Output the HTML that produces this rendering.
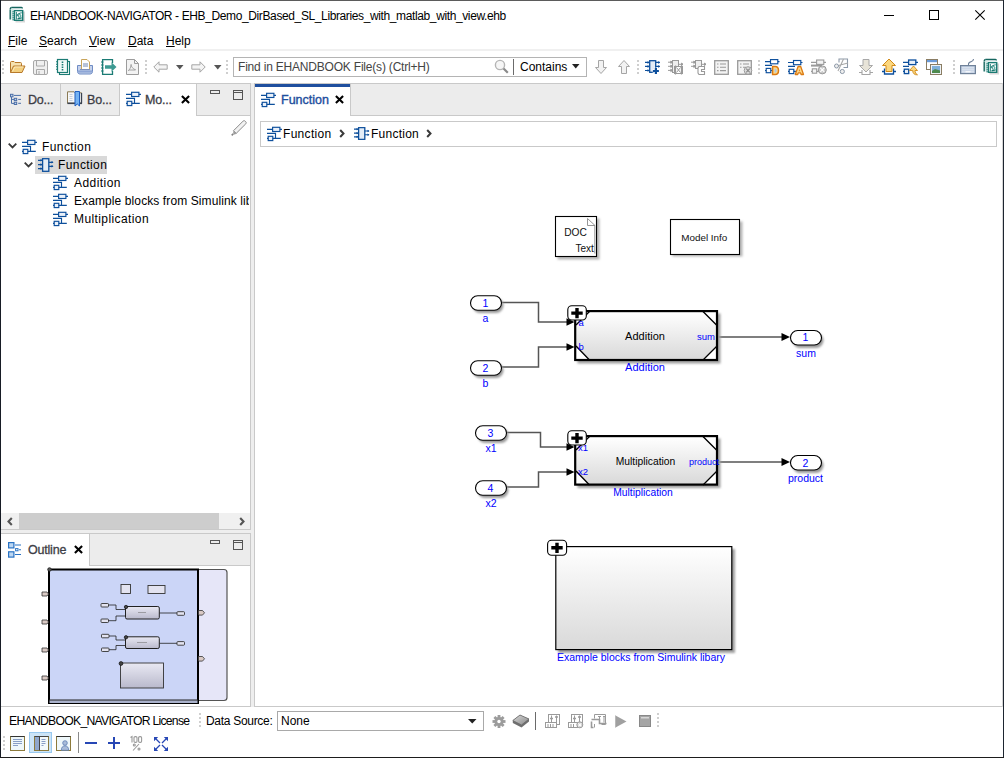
<!DOCTYPE html>
<html><head><meta charset="utf-8">
<style>
*{box-sizing:border-box}
html,body{margin:0;padding:0}
body{width:1004px;height:758px;overflow:hidden;position:relative;background:#fff;font-family:"Liberation Sans",sans-serif;font-size:12px;color:#000}
.a{position:absolute}
.t{position:absolute;white-space:nowrap;line-height:14px}
svg{position:absolute;overflow:visible}
.u{text-decoration:underline;text-underline-offset:1px}
.bd{background:#c9c9c9}
.tb{color:#3d3d45;-webkit-text-stroke:0.3px #3d3d45;letter-spacing:-0.2px}
.dl{position:absolute;width:2px;background:repeating-linear-gradient(to bottom,#cfcfcf 0 2px,transparent 2px 4px)}
</style></head><body>

<svg width="0" height="0" style="position:absolute">
<defs>
<symbol id="mdl" viewBox="0 0 16 16">
<path d="M0 3.4h15M0 7.4h8.5v5M0 12.4h13.8" fill="none" stroke="#0d4f9c" stroke-width="1.15"/>
<rect x="5.6" y="1.3" width="7.3" height="4.2" fill="#eaf1fa" stroke="#0d4f9c" stroke-width="1.15"/>
<rect x="1.2" y="10.3" width="4.6" height="4.3" fill="#eaf1fa" stroke="#0d4f9c" stroke-width="1.15"/>
</symbol>
<symbol id="cmp" viewBox="0 0 16 14">
<rect x="4.6" y="0.7" width="6.2" height="12.6" fill="#e4edf7" stroke="#0d4f9c" stroke-width="1.3"/>
<path d="M0 2.3h4M0 6.6h4M0 10.6h4M10.8 4.3h4.2M10.8 8.3h4.2" stroke="#0d4f9c" stroke-width="1.2"/>
<path d="M2.5 1l2 1.3-2 1.3zM2.5 5.3l2 1.3-2 1.3zM2.5 9.3l2 1.3-2 1.3zM13.5 3l2 1.3-2 1.3zM13.5 7l2 1.3-2 1.3z" fill="#0d4f9c"/>
</symbol>
<symbol id="xcl" viewBox="0 0 10 10">
<path d="M1 1L9 9M9 1L1 9" stroke="#000" stroke-width="2.3"/>
</symbol>
</defs>
</svg>

<!-- window frame -->
<div class="a" style="left:0;top:0;width:1004px;height:1px;background:#5b5b5b"></div>
<div class="a" style="left:0;top:0;width:1px;height:758px;background:#171c25"></div>
<div class="a" style="left:1003px;top:0;width:1px;height:758px;background:#1d2530"></div>
<div class="a" style="left:0;top:757px;width:1004px;height:1px;background:#1d1d1d"></div>

<!-- title bar -->
<!-- app icon -->
<svg style="left:9px;top:6px" width="17" height="18" viewBox="0 0 17 18">
<rect x="6.5" y="5.5" width="9.5" height="11" fill="#c8c8c8" opacity="0.7"/>
<path d="M2.8 1.5H12.5c0.6 0 0.9 0.4 0.9 1" fill="none" stroke="#16665f" stroke-width="1.3"/>
<path d="M1.2 3.5v10" stroke="#16665f" stroke-width="1.4"/>
<path d="M2.2 2.5h2.3v11h-2.3z" fill="#cfe8e4"/><path d="M1.2 3.3c0-1 0.6-1.8 1.6-1.8" fill="none" stroke="#16665f" stroke-width="1.3"/>
<rect x="5.4" y="4.6" width="8.3" height="9.7" fill="#fff" stroke="#1a7a72" stroke-width="1.4"/>
<path d="M3.5 5l2 0.8-2 0.8zM3.5 7l2 0.8-2 0.8zM3.5 9l2 0.8-2 0.8zM3.5 11l2 0.8-2 0.8zM3.5 13l2 0.8-2 0.8z" fill="#1a7a72"/>
<path d="M7.3 6v7.5" stroke="#1a7a72" stroke-width="1"/>
<path d="M8 10c0.5-2 2-3 4.8-3.3M8.5 12.8c1.5-0.5 2.8-0.3 4.3-1" fill="none" stroke="#1a7a72" stroke-width="1.1"/>
<circle cx="10.6" cy="9.9" r="1.9" fill="#5aa79f"/>
<path d="M10.6 8.8l0.7 1.1-0.7 1.1-0.7-1.1z" fill="#fff"/>
</svg>
<!-- window controls -->
<div class="a" style="left:884px;top:15px;width:10px;height:1px;background:#000"></div>
<div class="a" style="left:929px;top:10px;width:10px;height:10px;border:1px solid #000"></div>
<svg style="left:975px;top:10px" width="10" height="10" viewBox="0 0 10 10"><path d="M0.3 0.3L9.7 9.7M9.7 0.3L0.3 9.7" stroke="#000" stroke-width="1.1"/></svg>

<!-- toolbar -->
<div class="dl" style="left:2px;top:60px;height:14px"></div>
<svg style="left:9px;top:59px" width="17" height="16" viewBox="0 0 17 16">
<path d="M1.5 13.5v-10c0-0.6 0.4-1 1-1h2.5l1 1h5.5c0.6 0 1 0.4 1 1v2.5" fill="#f6e2b0" stroke="#b8792a" stroke-width="1"/>
<path d="M1.5 13.5l3-6.5h11.5l-3 6.5z" fill="#f3cf7e" stroke="#b8792a" stroke-width="1" stroke-linejoin="round"/>
<path d="M3.5 12.5l2.2-4.5h8.5" fill="none" stroke="#fbe9bd" stroke-width="1"/>
</svg>
<svg style="left:32px;top:59px" width="16" height="16" viewBox="0 0 16 16">
<rect x="1.5" y="1.5" width="14" height="14" rx="1.5" fill="#efefef" stroke="#a8a8a8" stroke-width="1"/>
<path d="M4.5 1.5v5.5h8v-5.5M4.5 15.5v-5h8v5M7 12v3.5" fill="none" stroke="#a8a8a8" stroke-width="1"/>
</svg>
<svg style="left:55px;top:59px" width="16" height="16" viewBox="0 0 16 16">
<rect x="4.5" y="2.5" width="10" height="13" fill="#fff" stroke="#1b7b74" stroke-width="1.1"/>
<rect x="2.5" y="0.5" width="10" height="13" fill="#f2faf8" stroke="#1b7b74" stroke-width="1.2"/>
<path d="M7.5 2.5v9" stroke="#1b7b74" stroke-width="1.6" stroke-dasharray="1.5 1"/>
<path d="M1 2.5l2 1M1 5l2 1M1 7.5l2 1M1 10l2 1" stroke="#1b7b74" stroke-width="1"/>
</svg>
<svg style="left:77px;top:59px" width="17" height="16" viewBox="0 0 17 16">
<path d="M0.5 6.5h15v6c0 1.5-1 2.5-2.5 2.5h-10c-1.5 0-2.5-1-2.5-2.5z" fill="#c6d3ec" stroke="#6f8cc4" stroke-width="1"/>
<path d="M1 12.5h14" stroke="#8ea6d6" stroke-width="2.2"/>
<path d="M4.5 0.5h5.5l2.5 2.5v7.5h-8z" fill="#fdfdfd" stroke="#c8a45a" stroke-width="1"/>
<path d="M6 5h5M6 7h5" stroke="#6f86b4" stroke-width="1"/>
<path d="M3 10.5h10" stroke="#7d8fb8" stroke-width="1"/>
</svg>
<svg style="left:100px;top:59px" width="17" height="16" viewBox="0 0 17 16">
<path d="M12.5 4V0.6H2.6V15.4H12.5V12" fill="none" stroke="#1b7b74" stroke-width="1.3"/>
<path d="M1 3h2.5M1 6h2.5M1 9h2.5M1 12h2.5" stroke="#1b7b74" stroke-width="1"/>
<path d="M5 6.3h6.5v-3l5 4.7-5 4.7v-3h-6.5z" fill="#3d9a92"/>
</svg>
<svg style="left:126px;top:59px" width="13" height="16" viewBox="0 0 13 16">
<path d="M0.5 0.5h8l4 4v11h-12z" fill="#f3f3f3" stroke="#9c9c9c" stroke-width="1"/>
<path d="M8.5 0.5v4h4" fill="none" stroke="#9c9c9c" stroke-width="1"/>
<path d="M5 5c0 3 2 5 5 6M5 6c0 3-2 5-3 6M3 11h6" fill="none" stroke="#9c9c9c" stroke-width="0.9"/>
</svg>
<div class="dl" style="left:145px;top:60px;height:14px"></div>
<svg style="left:153px;top:61px" width="15" height="12" viewBox="0 0 15 12">
<path d="M0.8 6L6 0.8v3h8.2v4.4H6v3z" fill="#f4f4f4" stroke="#a5a5a5" stroke-width="1" stroke-linejoin="round"/>
</svg>
<svg style="left:176px;top:65px" width="8" height="5" viewBox="0 0 8 5"><path d="M0 0h7.5l-3.75 4.5z" fill="#555"/></svg>
<svg style="left:191px;top:61px" width="15" height="12" viewBox="0 0 15 12">
<path d="M14.2 6L9 0.8v3H0.8v4.4H9v3z" fill="#f4f4f4" stroke="#a5a5a5" stroke-width="1" stroke-linejoin="round"/>
</svg>
<svg style="left:214px;top:65px" width="8" height="5" viewBox="0 0 8 5"><path d="M0 0h7.5l-3.75 4.5z" fill="#555"/></svg>
<div class="dl" style="left:226px;top:60px;height:14px"></div>
<!-- search -->
<div class="a" style="left:233px;top:57px;width:354px;height:20px;border:1px solid #b4b4b4;background:#fff"></div>
<div class="t" style="left:238px;top:60px;color:#444;letter-spacing:-0.2px">Find in EHANDBOOK File(s) (Ctrl+H)</div>
<svg style="left:494px;top:59px" width="15" height="15" viewBox="0 0 15 15">
<circle cx="6" cy="6" r="4.6" fill="#f6f6f6" stroke="#b5b5b5" stroke-width="1.4"/>
<path d="M9.5 9.5L13.8 13.8" stroke="#8a8a8a" stroke-width="2.2"/>
</svg>
<div class="a" style="left:513px;top:59px;width:1px;height:16px;background:#6b6b6b"></div>
<div class="t" style="left:520px;top:60px">Contains</div>
<svg style="left:572px;top:64px" width="8" height="5" viewBox="0 0 8 5"><path d="M0 0h7.5l-3.75 4.5z" fill="#222"/></svg>

<div class="t" style="left:30px;top:9px;letter-spacing:-0.38px">EHANDBOOK-NAVIGATOR - EHB_Demo_DirBased_SL_Libraries_with_matlab_with_view.ehb</div>

<!-- menu -->
<div class="t" style="left:8px;top:34px"><span class="u">F</span>ile</div>
<div class="t" style="left:39px;top:34px"><span class="u">S</span>earch</div>
<div class="t" style="left:89px;top:34px"><span class="u">V</span>iew</div>
<div class="t" style="left:128px;top:34px"><span class="u">D</span>ata</div>
<div class="t" style="left:166px;top:34px"><span class="u">H</span>elp</div>
<div class="a" style="left:1px;top:49px;width:1002px;height:2px;background:#f0f0f0"></div>


<!-- right toolbar -->
<svg style="left:595px;top:60px" width="12" height="14" viewBox="0 0 12 14">
<path d="M3.5 0.5h5v7h3l-5.5 6-5.5-6h3z" fill="#f2f2f2" stroke="#a5a5a5" stroke-width="1" stroke-linejoin="round"/>
</svg>
<svg style="left:618px;top:60px" width="12" height="14" viewBox="0 0 12 14">
<path d="M3.5 13.5h5v-7h3l-5.5-6-5.5 6h3z" fill="#f2f2f2" stroke="#a5a5a5" stroke-width="1" stroke-linejoin="round"/>
</svg>
<div class="dl" style="left:637px;top:60px;height:14px"></div>
<svg style="left:645px;top:60px" width="16" height="15" viewBox="0 0 16 15">
<rect x="4.7" y="0.7" width="6" height="11.6" fill="#e2ebf6" stroke="#0d4f9c" stroke-width="1.3"/>
<path d="M0 2.4h4M0 6.4h4M0 10.5h4M10.7 2.4h4M10.7 6.4h4" stroke="#0d4f9c" stroke-width="1.2"/>
<path d="M2.6 0.9l1.8 1.5-1.8 1.5zM2.6 4.9l1.8 1.5-1.8 1.5zM2.6 9l1.8 1.5-1.8 1.5zM13.3 0.9l1.8 1.5-1.8 1.5zM13.3 4.9l1.8 1.5-1.8 1.5z" fill="#0d4f9c"/>
<path d="M10.9 7.8v6.4M7.7 11h6.4" stroke="#fff" stroke-width="3.6"/>
<path d="M10.9 8v6M7.9 11h6" stroke="#0d4f9c" stroke-width="2.2"/>
</svg>
<svg style="left:668px;top:60px" width="16" height="15" viewBox="0 0 16 15" fill="none" stroke="#9a9a9a" stroke-width="1">
<rect x="4.5" y="0.5" width="6" height="12" fill="#eee"/>
<path d="M0 2.2h4.5M0 6.3h4.5M0 10.4h4.5M10.5 4.3h4.5"/>
<path d="M2.8 1l1.5 1.2-1.5 1.2zM2.8 5.1l1.5 1.2-1.5 1.2zM2.8 9.2l1.5 1.2-1.5 1.2zM13.5 3.1l1.5 1.2-1.5 1.2z" fill="#9a9a9a"/>
<rect x="6.5" y="6.5" width="8" height="7" fill="#fff"/>
<path d="M8.5 7.5l4 5M12.5 7.5l-4 5"/>
<path d="M7.5 5.5v9M13.5 5.5v9" stroke-width="1.2"/>
</svg>
<svg style="left:691px;top:60px" width="16" height="15" viewBox="0 0 16 15" fill="none" stroke="#9a9a9a" stroke-width="1">
<rect x="4.5" y="0.5" width="6" height="8" fill="#eee"/>
<path d="M0 2.2h4.5M0 6.3h4.5M10.5 4.3h4.5"/>
<path d="M2.8 1l1.5 1.2-1.5 1.2zM2.8 5.1l1.5 1.2-1.5 1.2zM13.5 3.1l1.5 1.2-1.5 1.2z" fill="#9a9a9a"/>
<path d="M13.5 6.5h-5.5l-1 1.5v5l1 1.5h5.5v-3h-3v-2h3z" fill="#fff" stroke-width="1.1"/>
</svg>
<svg style="left:714px;top:60px" width="15" height="15" viewBox="0 0 15 15">
<rect x="0.7" y="0.7" width="13.6" height="13.6" fill="#f3f3f3" stroke="#9a9a9a" stroke-width="1.3"/>
<path d="M3 4h1.5M6 4h6M3 7.3h1.5M6 7.3h6M3 10.6h1.5M6 10.6h6" stroke="#9a9a9a" stroke-width="1.1"/>
</svg>
<svg style="left:737px;top:60px" width="16" height="15" viewBox="0 0 16 15">
<rect x="0.7" y="0.7" width="13.6" height="13.6" fill="#f3f3f3" stroke="#9a9a9a" stroke-width="1.3"/>
<path d="M3 4h1.5M6 4h6M3 7.3h1.5M6 7.3h3" stroke="#9a9a9a" stroke-width="1.1"/>
<circle cx="11" cy="10.5" r="3.8" fill="#ddd" stroke="#9a9a9a" stroke-width="1"/>
<path d="M9.2 8.7l3.6 3.6M12.8 8.7l-3.6 3.6" stroke="#8a8a8a" stroke-width="1.2"/>
</svg>
<div class="dl" style="left:758px;top:60px;height:14px"></div>
<svg style="left:765px;top:59px" width="16" height="17" viewBox="0 0 16 17">
<path d="M0 2.6h14.5M0 6.4h7M0 11.5h13.5" fill="none" stroke="#0d4f9c" stroke-width="1.15"/>
<rect x="5.5" y="0.6" width="7.3" height="4.2" fill="#fff" stroke="#0d4f9c" stroke-width="1.15"/>
<rect x="1.2" y="9.4" width="4.6" height="4.3" fill="#fff" stroke="#0d4f9c" stroke-width="1.15"/>
<path d="M7.6 7.6h2.6c2.3 0 3.3 1.8 3.3 4s-1 4-3.3 4h-2.6z" fill="#fcd98a" stroke="#dc7a12" stroke-width="1.5"/>
<path d="M9.6 9.8v3.7h0.6c0.9 0 1.3-0.8 1.3-1.85s-0.4-1.85-1.3-1.85z" fill="#a9c8ec"/>
</svg>
<svg style="left:788px;top:59px" width="16" height="17" viewBox="0 0 16 17">
<path d="M0 3.5h14.5M0 7.4h7M0 12.4h13.5" fill="none" stroke="#0d4f9c" stroke-width="1.15"/>
<rect x="5.5" y="1.5" width="7.3" height="4.2" fill="#fff" stroke="#0d4f9c" stroke-width="1.15"/>
<rect x="1.2" y="10.3" width="4.6" height="4.3" fill="#fff" stroke="#0d4f9c" stroke-width="1.15"/>
<path d="M7.3 15.5l2.8-8h2.6l2.8 8h-2.4l-0.5-1.6h-2.4l-0.5 1.6z" fill="#fcd98a" stroke="#dc7a12" stroke-width="1.3" stroke-linejoin="round"/>
<path d="M10.7 12.2h1.4l-0.7-2.3z" fill="#dc7a12"/>
</svg>
<svg style="left:811px;top:59px" width="16" height="16" viewBox="0 0 16 16">
<path d="M0 3.4h15M0 12.4h8" fill="none" stroke="#9a9a9a" stroke-width="1.1"/>
<path d="M0 6.6h11" fill="none" stroke="#9a9a9a" stroke-width="2"/>
<rect x="5.6" y="1" width="7.2" height="4.4" fill="#f3f3f3" stroke="#9a9a9a" stroke-width="1.1"/>
<rect x="1.3" y="9.8" width="4.4" height="4.4" fill="#f3f3f3" stroke="#9a9a9a" stroke-width="1.1"/>
<circle cx="11.3" cy="10.9" r="4" fill="#c9c9c9" stroke="#9a9a9a" stroke-width="1"/>
<path d="M9.3 8.9l4 4M13.3 8.9l-4 4" stroke="#fff" stroke-width="1.2"/>
</svg>
<svg style="left:834px;top:58px" width="16" height="16" viewBox="0 0 16 16">
<path d="M5 4.5v-3.5h8.5v8.5h-4" fill="none" stroke="#8d99a8" stroke-width="1.1"/>
<path d="M9.5 1L4 13M14 5L2.5 8" stroke="#a8a8a8" stroke-width="1.1"/>
<circle cx="2.5" cy="8" r="2" fill="#eee" stroke="#8d99a8" stroke-width="1"/>
<circle cx="8.3" cy="13.5" r="2.1" fill="#eee" stroke="#8d99a8" stroke-width="1"/>
</svg>
<svg style="left:859px;top:59px" width="14" height="16" viewBox="0 0 14 16">
<path d="M4 0.5h6v6h3.5l-6.5 6.5-6.5-6.5h3.5z" fill="#e8e4d8" stroke="#a8a8a8" stroke-width="1"/>
<path d="M0 13.5h3M11 13.5h3M3 11v4.5h8V11" fill="none" stroke="#a5a5a5" stroke-width="1.1"/>
</svg>
<svg style="left:882px;top:59px" width="14" height="16" viewBox="0 0 14 16">
<path d="M2.5 9.5v5.5h9V9.5M0 12.5h2.5M11.5 12.5h2.5" fill="none" stroke="#0d4f9c" stroke-width="1.3"/>
<path d="M4 12.5h6v-6h3.5l-6.5-6.5-6.5 6.5h3.5z" fill="#fcd77e" stroke="#d08a1a" stroke-width="1"/>
</svg>
<svg style="left:903px;top:59px" width="16" height="16" viewBox="0 0 16 16">
<path d="M0 3.4h15M0 7.4h6M0 12.4h5" fill="none" stroke="#0d4f9c" stroke-width="1.3"/>
<rect x="5.6" y="1" width="7.2" height="4.6" fill="#eaf1fa" stroke="#0d4f9c" stroke-width="1.3"/>
<rect x="1.3" y="10.2" width="4.4" height="4.4" fill="#eaf1fa" stroke="#0d4f9c" stroke-width="1.3"/>
<path d="M6.5 11.5l4-4.5 4 4.5h-2.5c0 2 1 3.5 2.5 4.3-3 0.3-4.8-1.5-4.8-4.3z" fill="#fcd77e" stroke="#d08a1a" stroke-width="0.9"/>
</svg>
<svg style="left:926px;top:59px" width="16" height="16" viewBox="0 0 16 16">
<rect x="0.5" y="0.5" width="11" height="10" fill="#fff" stroke="#8a7d63" stroke-width="1"/>
<rect x="1" y="1" width="10" height="2.2" fill="#6a9ad8"/>
<rect x="4.5" y="5.5" width="11" height="10" fill="#eef2f6" stroke="#8a7d63" stroke-width="1"/>
<rect x="6" y="7" width="8" height="7" fill="#7fb0d9"/>
<path d="M6 12l3-2 5 1.5V14H6z" fill="#4e8a4e"/>
</svg>
<div class="dl" style="left:953px;top:60px;height:14px"></div>
<svg style="left:960px;top:58px" width="17" height="17" viewBox="0 0 17 17">
<path d="M8.5 7.5v-1.5c0-1.5 1.5-2 3-2.5s2-1.2 2-2.5" fill="none" stroke="#6f8199" stroke-width="1.1"/>
<rect x="0.6" y="7.6" width="14.8" height="8" fill="#c4d1e4" stroke="#6f8199" stroke-width="1.2"/>
<path d="M2.5 9.8h11M2.5 11.8h11M2.5 13.8h11" stroke="#fff" stroke-width="1" stroke-dasharray="1 1"/>
<path d="M5.5 13.8h5" stroke="#fff" stroke-width="1"/>
</svg>
<svg style="left:983px;top:58px" width="17" height="18" viewBox="0 0 17 18">
<rect x="6.5" y="5.5" width="9.5" height="11" fill="#c8c8c8" opacity="0.7"/>
<path d="M2.8 1.5H12.5c0.6 0 0.9 0.4 0.9 1" fill="none" stroke="#16665f" stroke-width="1.3"/>
<path d="M1.2 3.5v10" stroke="#16665f" stroke-width="1.4"/>
<path d="M2.2 2.5h2.3v11h-2.3z" fill="#cfe8e4"/><path d="M1.2 3.3c0-1 0.6-1.8 1.6-1.8" fill="none" stroke="#16665f" stroke-width="1.3"/>
<rect x="5.4" y="4.6" width="8.3" height="9.7" fill="#fff" stroke="#1a7a72" stroke-width="1.4"/>
<path d="M3.5 5l2 0.8-2 0.8zM3.5 7l2 0.8-2 0.8zM3.5 9l2 0.8-2 0.8zM3.5 11l2 0.8-2 0.8zM3.5 13l2 0.8-2 0.8z" fill="#1a7a72"/>
<path d="M7.3 6v7.5" stroke="#1a7a72" stroke-width="1"/>
<path d="M8 10c0.5-2 2-3 4.8-3.3M8.5 12.8c1.5-0.5 2.8-0.3 4.3-1" fill="none" stroke="#1a7a72" stroke-width="1.1"/>
<circle cx="10.6" cy="9.9" r="1.9" fill="#5aa79f"/>
<path d="M10.6 8.8l0.7 1.1-0.7 1.1-0.7-1.1z" fill="#fff"/>
</svg>

<!-- left panel top -->
<div class="a bd" style="left:1px;top:83px;width:250px;height:1px"></div>
<div class="a" style="left:1px;top:84px;width:249px;height:31px;background:#ececec"></div>
<div class="a bd" style="left:1px;top:115px;width:249px;height:1px"></div>
<div class="a bd" style="left:250px;top:83px;width:1px;height:447px"></div>
<div class="a bd" style="left:60px;top:84px;width:1px;height:31px"></div>
<div class="a" style="left:119px;top:84px;width:78px;height:32px;background:#fff;border-left:1px solid #c9c9c9;border-right:1px solid #c9c9c9"></div>
<div class="a bd" style="left:1px;top:529px;width:250px;height:1px"></div>
<div class="a" style="left:251px;top:83px;width:3px;height:624px;background:#eeeeee"></div>
<div class="a" style="left:1px;top:530px;width:250px;height:3px;background:#eeeeee"></div>

<!-- outline panel -->
<div class="a bd" style="left:1px;top:533px;width:250px;height:1px"></div>
<div class="a" style="left:89px;top:534px;width:161px;height:32px;background:#ececec;border-left:1px solid #c9c9c9;border-bottom:1px solid #c9c9c9"></div>
<div class="a bd" style="left:250px;top:533px;width:1px;height:174px"></div>
<div class="a bd" style="left:1px;top:706px;width:250px;height:1px"></div>

<!-- editor panel -->
<div class="a bd" style="left:254px;top:83px;width:749px;height:1px"></div>
<div class="a bd" style="left:254px;top:83px;width:1px;height:624px"></div>
<div class="a" style="left:350px;top:84px;width:653px;height:32px;background:#ececec;border-left:1px solid #c9c9c9;border-bottom:1px solid #c9c9c9"></div>
<div class="a" style="left:255px;top:84px;width:95px;height:3px;background:#1f4f9e"></div>
<div class="a bd" style="left:254px;top:706px;width:749px;height:1px"></div>
<div class="a" style="left:1002px;top:83px;width:1px;height:624px;background:#d6d6d6"></div>
<div class="a" style="left:260px;top:121px;width:737px;height:26px;border:1px solid #c9c9c9"></div>


<!-- left tabs content -->
<svg style="left:10px;top:94px" width="12" height="11" viewBox="0 0 12 11">
<path d="M1.5 2.8v6.6h2.5M1.5 5.4h2.5M4 1.4h7M8.2 5.4h2.8M8.2 9.3h2.8" fill="none" stroke="#4a6fa8" stroke-width="1"/>
<rect x="0.5" y="0.3" width="2.5" height="2.5" fill="#c4d3ea" stroke="#4a6fa8" stroke-width="1"/>
<rect x="4.3" y="4.3" width="2.4" height="2.3" fill="#c4d3ea" stroke="#4a6fa8" stroke-width="1"/>
<rect x="4.3" y="8.2" width="2.4" height="2.3" fill="#c4d3ea" stroke="#4a6fa8" stroke-width="1"/>
</svg>
<div class="t tb" style="left:28px;top:93px;font-size:12.5px">Do...</div>
<svg style="left:67px;top:91px" width="16" height="16" viewBox="0 0 16 16">
<path d="M0.5 0.8h6.5l1 1h6.5v10.5h-14z" fill="#f7f7f7" stroke="#8b7b55" stroke-width="1"/>
<path d="M0.5 12.3h14.5" stroke="#3a4250" stroke-width="1.6"/>
<path d="M2.5 3.5h3M2.5 5.5h3M2.5 7.5h3M2.5 9.5h3" stroke="#b9c4d4" stroke-width="0.8"/>
<path d="M14.5 2v10.5" stroke="#3a4250" stroke-width="1.3"/>
<path d="M8 0.5h4.5v14.5l-2.2-2-2.3 2z" fill="#74b2f2" stroke="#1f5fc0" stroke-width="1"/>
</svg>
<div class="t tb" style="left:87px;top:93px;font-size:12.5px">Bo...</div>
<svg style="left:126px;top:91px" width="16" height="16"><use href="#mdl"/></svg>
<div class="t tb" style="left:145px;top:93px;font-size:12.5px">Mo...</div>
<svg style="left:181px;top:95px" width="9" height="9" viewBox="0 0 10 10"><use href="#xcl"/></svg>
<div class="a" style="left:210px;top:90px;width:10px;height:4px;border:1px solid #555"></div>
<div class="a" style="left:233px;top:90px;width:10px;height:10px;border:1px solid #555"><div class="a" style="left:0;top:1px;width:8px;height:1px;background:#555"></div></div>
<svg style="left:229px;top:119px" width="18" height="18" viewBox="0 0 18 18">
<path d="M14.1 2.1c0.6-0.6 1.4-0.6 2 0l0.7 0.7c0.6 0.6 0.6 1.4 0 2L7.2 14.4 4.5 11.7z" fill="#f2f2f2" stroke="#8a8a8a" stroke-width="1"/>
<path d="M4.5 11.7l2.7 2.7-1.2 1.2-1.5-0.3-0.3-1.5z" fill="#9a9a9a"/>
<path d="M4.3 14.8l-1.6 1.6" stroke="#808080" stroke-width="1.6"/>
</svg>

<!-- tree -->
<svg style="left:8px;top:143px" width="9" height="6" viewBox="0 0 9 6"><path d="M0.7 0.7l3.8 3.8 3.8-3.8" fill="none" stroke="#3a3a3a" stroke-width="1.8"/></svg>
<svg style="left:22px;top:139px" width="16" height="16"><use href="#mdl"/></svg>
<div class="t" style="left:42px;top:140px;letter-spacing:0.4px">Function</div>
<div class="a" style="left:35px;top:156px;width:72px;height:18px;background:#d9d9d9"></div>
<svg style="left:24px;top:162px" width="9" height="6" viewBox="0 0 9 6"><path d="M0.7 0.7l3.8 3.8 3.8-3.8" fill="none" stroke="#3a3a3a" stroke-width="1.8"/></svg>
<svg style="left:38px;top:158px" width="16" height="14"><use href="#cmp"/></svg>
<div class="t" style="left:58px;top:158px;letter-spacing:0.4px">Function</div>
<svg style="left:53px;top:175px" width="16" height="16"><use href="#mdl"/></svg>
<div class="t" style="left:74px;top:176px;letter-spacing:0.45px">Addition</div>
<svg style="left:53px;top:193px" width="16" height="16"><use href="#mdl"/></svg>
<div class="a" style="left:74px;top:194px;width:175px;height:16px;overflow:hidden"><div class="t" style="left:0;top:0;letter-spacing:0.1px">Example blocks from Simulink library</div></div>
<svg style="left:53px;top:211px" width="16" height="16"><use href="#mdl"/></svg>
<div class="t" style="left:74px;top:212px;letter-spacing:0.4px">Multiplication</div>

<!-- scrollbar -->
<div class="a" style="left:1px;top:513px;width:249px;height:16px;background:#f0f0f0"></div>
<div class="a" style="left:19px;top:513px;width:200px;height:16px;background:#cdcdcd"></div>
<svg style="left:7px;top:517px" width="6" height="9" viewBox="0 0 6 9"><path d="M4.8 1L1.5 4.5 4.8 8" fill="none" stroke="#555" stroke-width="2.1"/></svg>
<svg style="left:239px;top:517px" width="6" height="9" viewBox="0 0 6 9"><path d="M1.2 1L4.5 4.5 1.2 8" fill="none" stroke="#555" stroke-width="2.1"/></svg>

<!-- outline tab -->
<svg style="left:8px;top:542px" width="14" height="16" viewBox="0 0 14 16">
<rect x="0.6" y="0.6" width="5.3" height="5.3" fill="#bcd7f3" stroke="#2a73c4" stroke-width="1.2"/>
<rect x="0.6" y="9.8" width="5.3" height="5.3" fill="#bcd7f3" stroke="#2a73c4" stroke-width="1.2"/>
<rect x="7.6" y="6.6" width="2.4" height="2.2" fill="#fff" stroke="#2a73c4" stroke-width="1"/>
<path d="M7 3h6M11 7.7h2M7 12.5h6" stroke="#2a73c4" stroke-width="1.1"/>
</svg>
<div class="t tb" style="left:28px;top:543px;font-size:12.5px">Outline</div>
<svg style="left:74px;top:545px" width="9" height="9" viewBox="0 0 10 10"><use href="#xcl"/></svg>
<div class="a" style="left:210px;top:540px;width:10px;height:4px;border:1px solid #555"></div>
<div class="a" style="left:233px;top:540px;width:10px;height:10px;border:1px solid #555"><div class="a" style="left:0;top:1px;width:8px;height:1px;background:#555"></div></div>

<!-- editor tab -->
<svg style="left:261px;top:92px" width="16" height="16"><use href="#mdl"/></svg>
<div class="t" style="left:281px;top:93px;color:#1f4f9e;font-size:12.5px;-webkit-text-stroke:0.4px #1f4f9e;letter-spacing:0px">Function</div>
<svg style="left:335px;top:95px" width="9" height="9" viewBox="0 0 10 10"><use href="#xcl"/></svg>

<!-- breadcrumb -->
<svg style="left:267px;top:126px" width="16" height="16"><use href="#mdl"/></svg>
<div class="t" style="left:283px;top:127px;letter-spacing:0.3px">Function</div>
<svg style="left:339px;top:129px" width="6" height="9" viewBox="0 0 6 9"><path d="M1.2 1L4.5 4.5 1.2 8" fill="none" stroke="#3a3a3a" stroke-width="2"/></svg>
<svg style="left:354px;top:127px" width="16" height="13" viewBox="0 0 16 14" preserveAspectRatio="none"><use href="#cmp"/></svg>
<div class="t" style="left:371px;top:127px;letter-spacing:0.25px">Function</div>
<svg style="left:426px;top:129px" width="6" height="9" viewBox="0 0 6 9"><path d="M1.2 1L4.5 4.5 1.2 8" fill="none" stroke="#3a3a3a" stroke-width="2"/></svg>

<!-- diagram -->
<svg style="left:0;top:0" width="1004" height="758" viewBox="0 0 1004 758" font-family="Liberation Sans, sans-serif">
<defs>
<linearGradient id="bg" x1="0" y1="0" x2="0" y2="1"><stop offset="0" stop-color="#ffffff"/><stop offset="1" stop-color="#d9d9d9"/></linearGradient>
<filter id="sh" x="-20%" y="-20%" width="140%" height="150%"><feGaussianBlur stdDeviation="1.2"/></filter>
</defs>
<!-- DOC block -->
<rect x="557.5" y="218.5" width="42" height="41" fill="#b5b5b5" filter="url(#sh)"/>
<rect x="555.5" y="216.5" width="41" height="40" fill="#fff" stroke="#000" stroke-width="1.1"/>
<path d="M587.5 218.5v7h7.5zM594.8 225.5v28" fill="#fff" stroke="#8a8a8a" stroke-width="0.9"/>
<text x="575.5" y="236.4" font-size="10.2" text-anchor="middle" fill="#111">DOC</text>
<text x="593.8" y="252.2" font-size="10" text-anchor="end" fill="#111">Text</text>
<!-- Model info -->
<rect x="672.5" y="221.5" width="70" height="35" fill="#b5b5b5" filter="url(#sh)"/>
<rect x="670.5" y="219.5" width="69" height="35" fill="#fff" stroke="#000" stroke-width="1.1"/>
<text x="704.3" y="240.6" font-size="9.9" text-anchor="middle" fill="#111">Model Info</text>

<!-- wires -->
<g fill="none" stroke="#555" stroke-width="1.5">
<path d="M501.5 302.5H538.5V322H568"/>
<path d="M501.5 367H538.5V347H568"/>
<path d="M718 337H782"/>
<path d="M506.5 432.5H540.5V447H568"/>
<path d="M506.5 487H538.5V472H568"/>
<path d="M718 462H782"/>
</g>
<g fill="#000">
<path d="M566.5 318.3L574.5 322L566.5 325.7z"/>
<path d="M566.5 343.3L574.5 347L566.5 350.7z"/>
<path d="M781.5 333L790 337L781.5 341z"/>
<path d="M566.5 443.3L574.5 447L566.5 450.7z"/>
<path d="M566.5 468.3L574.5 472L566.5 475.7z"/>
<path d="M781.5 458L790 462L781.5 466z"/>
</g>

<!-- ports -->
<g fill="#9a9a9a" filter="url(#sh)">
<rect x="472.5" y="298" width="31" height="15" rx="7.5"/>
<rect x="472.5" y="363" width="31" height="15" rx="7.5"/>
<rect x="792.5" y="333" width="31" height="15" rx="7.5"/>
<rect x="477.5" y="428" width="31" height="15" rx="7.5"/>
<rect x="477.5" y="483" width="31" height="15" rx="7.5"/>
<rect x="792.5" y="458" width="31" height="15" rx="7.5"/>
</g>
<g fill="#fff" stroke="#000" stroke-width="1.1">
<rect x="470.5" y="295.8" width="31" height="14.5" rx="7.25"/>
<rect x="470.5" y="360.8" width="31" height="14.5" rx="7.25"/>
<rect x="790.5" y="330.5" width="31" height="14.5" rx="7.25"/>
<rect x="475.5" y="425.8" width="31" height="14.5" rx="7.25"/>
<rect x="475.5" y="480.8" width="31" height="14.5" rx="7.25"/>
<rect x="790.5" y="455.5" width="31" height="14.5" rx="7.25"/>
</g>
<g fill="#0000ff" font-size="10.5" text-anchor="middle">
<text x="485.5" y="307">1</text>
<text x="485.5" y="322">a</text>
<text x="485.5" y="372">2</text>
<text x="485.5" y="386.5">b</text>
<text x="805.5" y="341.4">1</text>
<text x="806" y="356.5">sum</text>
<text x="490.5" y="436.6">3</text>
<text x="491" y="452">x1</text>
<text x="490.5" y="491.7">4</text>
<text x="491" y="507">x2</text>
<text x="805.5" y="466.7">2</text>
<text x="805.5" y="481.5">product</text>
</g>

<!-- Addition block -->
<rect x="577.5" y="313.5" width="143" height="50" fill="#a0a0a0" filter="url(#sh)"/>
<rect x="575.2" y="311.1" width="141.8" height="48.9" fill="#fff"/>
<path d="M589.5 312H703L716 325V346L703 359H589.5L576 346V325z" fill="url(#bg)"/>
<path d="M576 325L589.5 311.5M703 311.5L717 325.5M717 346L703 360M576 346L589.5 360" stroke="#000" stroke-width="1.4"/>
<rect x="575.2" y="311.1" width="141.8" height="48.9" fill="none" stroke="#000" stroke-width="2.2"/>
<text x="645" y="340" font-size="11" text-anchor="middle" fill="#000">Addition</text>
<g fill="#0000ff">
<text x="578.5" y="325.5" font-size="9.5">a</text>
<text x="578.5" y="350" font-size="9.5">b</text>
<text x="715" y="340" font-size="9.5" text-anchor="end">sum</text>
</g>
<text x="645" y="371" font-size="11" text-anchor="middle" fill="#0000ff">Addition</text>
<!-- plus -->
<rect x="567.8" y="305.8" width="18.5" height="14.2" rx="4" fill="#fff" stroke="#000" stroke-width="1.1"/>
<path d="M577 308v10.2M571.3 313.1h11.4" stroke="#000" stroke-width="3.4"/>

<!-- Multiplication block -->
<rect x="577.5" y="438.5" width="143" height="49.5" fill="#a0a0a0" filter="url(#sh)"/>
<rect x="575.2" y="436.1" width="141.8" height="48.5" fill="#fff"/>
<path d="M589.5 437H703L716 450V471L703 484H589.5L576 471V450z" fill="url(#bg)"/>
<path d="M576 450L589.5 436.5M703 436.5L717 450.5M717 471L703 485M576 471L589.5 485" stroke="#000" stroke-width="1.4"/>
<rect x="575.2" y="436.1" width="141.8" height="48.5" fill="none" stroke="#000" stroke-width="2.2"/>
<text x="645.5" y="465" font-size="10.3" text-anchor="middle" fill="#000">Multiplication</text>
<g fill="#0000ff">
<text x="578" y="451" font-size="9.5">x1</text>
<text x="578" y="475" font-size="9.5">x2</text>
<text x="719" y="465" font-size="9" text-anchor="end">product</text>
</g>
<text x="643" y="496.4" font-size="10.3" text-anchor="middle" fill="#0000ff">Multiplication</text>
<rect x="567.8" y="430.8" width="18.5" height="14.2" rx="4" fill="#fff" stroke="#000" stroke-width="1.1"/>
<path d="M577 433v10.2M571.3 438.1h11.4" stroke="#000" stroke-width="3.4"/>

<!-- Example block -->
<rect x="558" y="549" width="177" height="104" fill="#a0a0a0" filter="url(#sh)"/>
<rect x="555.8" y="546.6" width="176" height="103" fill="url(#bg)" stroke="#000" stroke-width="1.2"/>
<text x="641" y="661" font-size="10.5" text-anchor="middle" fill="#0000ff">Example blocks from Simulink libary</text>
<rect x="547.6" y="540.3" width="19" height="15" rx="4" fill="#fff" stroke="#000" stroke-width="1.1"/>
<path d="M557 542.7v10.2M551.3 547.8h11.4" stroke="#000" stroke-width="3.4"/>
</svg>


<!-- outline canvas -->
<svg style="left:0;top:0" width="1004" height="758" viewBox="0 0 1004 758">
<defs><linearGradient id="og" x1="0" y1="0" x2="0" y2="1"><stop offset="0" stop-color="#e9e9f3"/><stop offset="1" stop-color="#b9b9cc"/></linearGradient></defs>
<rect x="49" y="569.5" width="178" height="131" rx="3" fill="#e6e6f8" stroke="#555" stroke-width="1.2"/>
<rect x="49" y="569.5" width="149" height="133.5" fill="#cbd5f7" stroke="#000" stroke-width="2"/>
<rect x="49.5" y="700" width="148" height="3" fill="#aab2cc"/><path d="M49 700h149" stroke="#222" stroke-width="1.2"/>
<circle cx="49.5" cy="569.5" r="1.8" fill="#555" stroke="#222" stroke-width="0.8"/>
<g fill="#d9c9c4" stroke="#333" stroke-width="0.8">
<path d="M42 592h5l1.5 2-1.5 2h-5z"/>
<path d="M42 620h5l1.5 2-1.5 2h-5z"/>
<path d="M42 648h5l1.5 2-1.5 2h-5z"/>
<path d="M42 676h5l1.5 2-1.5 2h-5z"/>
<path d="M198.5 610.5h4l2 2.3-2 2.3h-4z"/>
<path d="M198.5 656.5h4l2 2.3-2 2.3h-4z"/>
</g>
<g fill="#e3e3f0" stroke="#333" stroke-width="0.9">
<rect x="121" y="584.5" width="9.5" height="9"/>
<rect x="148" y="585.5" width="17" height="8"/>
<rect x="101" y="603.5" width="7.5" height="3.5" rx="0.8"/>
<rect x="101" y="619" width="7.5" height="3.5" rx="0.8"/>
<rect x="177" y="611.7" width="7.5" height="3.6" rx="0.8"/>
<rect x="101.5" y="634.3" width="7.5" height="3.5" rx="0.8"/>
<rect x="101.5" y="648" width="7.5" height="3.5" rx="0.8"/>
<rect x="177" y="641.6" width="7.5" height="3.6" rx="0.8"/>
</g>
<g fill="none" stroke="#222" stroke-width="0.8">
<path d="M108.5 605H116V609.5H125.5M108.5 620.7H116V616H125.5M159.3 613H177"/>
<path d="M109 636H116V640H125.5M109 649.7H116V645.5H125.5M159.3 643.3H177"/>
</g>
<rect x="125.5" y="606.5" width="33.8" height="12.5" rx="1.5" fill="url(#og)" stroke="#222" stroke-width="1"/>
<rect x="125.5" y="636.8" width="33.8" height="11.7" rx="1.5" fill="url(#og)" stroke="#222" stroke-width="1"/>
<rect x="120.5" y="663" width="43" height="25" fill="url(#og)" stroke="#333" stroke-width="0.9"/>
<g fill="#444" stroke="#111" stroke-width="0.7"><circle cx="126" cy="607" r="1.7"/><circle cx="126" cy="637.3" r="1.7"/><circle cx="121" cy="663.5" r="1.9"/></g>
<path d="M138 612.5h8M137 642.5h10" stroke="#777" stroke-width="0.6"/>
</svg>

<!-- status bar -->
<div class="t" style="left:9px;top:714px;letter-spacing:-0.72px;font-size:12.2px">EHANDBOOK_NAVIGATOR License</div>
<div class="dl" style="left:199px;top:713px;height:16px"></div>
<div class="t" style="left:206px;top:714px;letter-spacing:-0.3px">Data Source:</div>
<div class="a" style="left:277px;top:711px;width:207px;height:20px;border:1px solid #a9a9a9;background:#fff"></div>
<div class="t" style="left:281px;top:714px">None</div>
<svg style="left:468px;top:719px" width="9" height="5" viewBox="0 0 9 5"><path d="M0 0h8.5l-4.25 4.5z" fill="#222"/></svg>
<svg style="left:492px;top:715px" width="14" height="13" viewBox="0 0 14 13">
<g fill="#9c9c9c">
<circle cx="7" cy="6.5" r="4.6"/>
<rect x="5.6" y="0" width="2.8" height="13"/>
<rect x="0.5" y="5.1" width="13" height="2.8"/>
<rect x="5.6" y="0" width="2.8" height="13" transform="rotate(45 7 6.5)"/>
<rect x="5.6" y="0" width="2.8" height="13" transform="rotate(-45 7 6.5)"/>
</g>
<circle cx="7" cy="6.5" r="1.7" fill="#fff"/>
</svg>
<svg style="left:512px;top:714px" width="18" height="14" viewBox="0 0 18 14">
<defs><linearGradient id="stn" x1="0" y1="0" x2="1" y2="1"><stop offset="0" stop-color="#d8d8d8"/><stop offset="0.6" stop-color="#a8a8a8"/><stop offset="1" stop-color="#8a8a8a"/></linearGradient></defs>
<path d="M0.8 6.5L8 1l9 4v2.5l-7.5 6L0.8 9z" fill="#6f6f6f"/>
<path d="M0.8 6.5L8 1l9 4-7.5 6z" fill="url(#stn)" stroke="#6a6a6a" stroke-width="0.8"/>
</svg>
<div class="a" style="left:535px;top:712px;width:1px;height:18px;background:#6a6a6a"></div>
<svg style="left:545px;top:714px" width="16" height="14" viewBox="0 0 16 14" fill="none" stroke="#9a9a9a" stroke-width="1">
<rect x="3.5" y="0.5" width="11" height="10"/>
<path d="M6.5 1.5v7M11.5 1.5v7"/>
<path d="M5 4.5h3M10 3h3" stroke-width="1.6"/>
<rect x="0.5" y="8.5" width="11" height="5" fill="#fff"/>
<path d="M3 10v3M5.5 10v3M8 10v3"/>
</svg>
<svg style="left:568px;top:714px" width="16" height="14" viewBox="0 0 16 14" fill="none" stroke="#9a9a9a" stroke-width="1">
<rect x="3.5" y="0.5" width="11" height="10"/>
<path d="M6.5 1.5v7M11.5 1.5v7"/>
<path d="M5 4.5h3M10 3h3" stroke-width="1.6"/>
<rect x="0.5" y="8.5" width="9" height="5" fill="#fff"/>
<path d="M3 10v3M5.5 10v3"/>
<circle cx="11.8" cy="10.8" r="3" fill="#d0d0d0"/>
<path d="M10.3 9.3l3 3M13.3 9.3l-3 3" stroke="#fff" stroke-width="1.1"/>
</svg>
<svg style="left:591px;top:714px" width="16" height="14" viewBox="0 0 16 14" fill="none" stroke="#9a9a9a" stroke-width="1">
<path d="M3.5 4.5v-4h11v10h-4"/>
<path d="M7 2.5h3M8.5 2.5v6M12 2.5h2M13 2.5v6"/>
<path d="M0.5 5.5h8v4h7M0.5 7.5v6h2" stroke-width="1.6"/>
<path d="M3.5 10v3.5"/>
</svg>
<svg style="left:615px;top:715px" width="12" height="13" viewBox="0 0 12 13"><path d="M0.5 0.5L11.5 6.5L0.5 12.5z" fill="#a0a0a0"/><path d="M0.5 0.5v12" stroke="#b8b8b8"/></svg>
<svg style="left:639px;top:715px" width="12" height="12" viewBox="0 0 12 12"><rect x="0.5" y="0.5" width="11" height="11" fill="#a5a5a5" stroke="#888"/><rect x="2" y="2" width="8" height="1.5" fill="#d6d6d6"/></svg>
<div class="dl" style="left:657px;top:713px;height:16px"></div>

<!-- bottom row -->
<div class="dl" style="left:3px;top:736px;height:14px"></div>
<svg style="left:10px;top:736px" width="15" height="15" viewBox="0 0 15 15">
<rect x="0.5" y="0.5" width="14" height="14" fill="#eef7fa" stroke="#8c7a3c" stroke-width="1"/>
<path d="M0.5 0.5h14" stroke="#333" stroke-width="1"/>
<path d="M3 3.5h9M3 5.5h9M3 7.5h9M3 9.5h5" stroke="#7d93c0" stroke-width="0.9"/>
</svg>
<div class="a" style="left:29px;top:732px;width:23px;height:21px;background:#cce4f7;border:1px solid #99c9ef"></div>
<svg style="left:34px;top:736px" width="15" height="15" viewBox="0 0 15 15">
<rect x="0.5" y="0.5" width="14" height="14" fill="#f3f9fb" stroke="#8c7a3c" stroke-width="1"/>
<rect x="1" y="1" width="4.5" height="13" fill="#8fa6cc"/>
<path d="M5.5 0.5v14M0.5 0.5h14" stroke="#444" stroke-width="1"/>
<path d="M7.5 3.5h4M7.5 5.5h4M7.5 7.5h4M7.5 9.5h2" stroke="#7d93c0" stroke-width="0.9"/>
</svg>
<svg style="left:56px;top:736px" width="15" height="15" viewBox="0 0 15 15">
<rect x="0.5" y="0.5" width="14" height="14" fill="#eef7fa" stroke="#8c7a3c" stroke-width="1"/>
<path d="M0.5 0.5h14" stroke="#333" stroke-width="1"/>
<circle cx="9" cy="7" r="2.3" fill="#a9bcd9" stroke="#5d7eb4" stroke-width="0.8"/>
<path d="M5.3 14.3c0-3 1.6-4.5 3.7-4.5s3.7 1.5 3.7 4.5z" fill="#a9bcd9" stroke="#5d7eb4" stroke-width="0.8"/>
</svg>
<div class="a" style="left:78px;top:732px;width:1px;height:21px;background:#8a8a8a"></div>
<div class="a" style="left:85px;top:742px;width:12px;height:2px;background:#2747b5"></div>
<svg style="left:108px;top:737px" width="12" height="12" viewBox="0 0 12 12"><path d="M6 0v12M0 6h12" stroke="#2747b5" stroke-width="2"/></svg>
<svg style="left:130px;top:736px" width="13" height="15" viewBox="0 0 13 15" fill="none" stroke="#9a9a9a" stroke-width="1.1">
<path d="M0.5 1.5l1.5-1v6"/>
<rect x="4" y="0.6" width="3" height="5.8" rx="1.2"/>
<rect x="8.6" y="0.6" width="3" height="5.8" rx="1.2"/>
<path d="M3 14.5l6-6.5"/>
<circle cx="4.3" cy="9" r="1"/><circle cx="9" cy="13" r="1"/>
</svg>
<svg style="left:154px;top:737px" width="14" height="14" viewBox="0 0 14 14">
<path d="M1.5 1.5l4.5 4.5M12.5 1.5l-4.5 4.5M12.5 12.5l-4.5-4.5M1.5 12.5l4.5-4.5" stroke="#2747b5" stroke-width="1.3"/>
<path d="M0 0h4.2l-4.2 4.2zM14 0h-4.2l4.2 4.2zM14 14h-4.2l4.2-4.2zM0 14h4.2l-4.2-4.2z" fill="#2747b5"/>
</svg>
</body></html>
